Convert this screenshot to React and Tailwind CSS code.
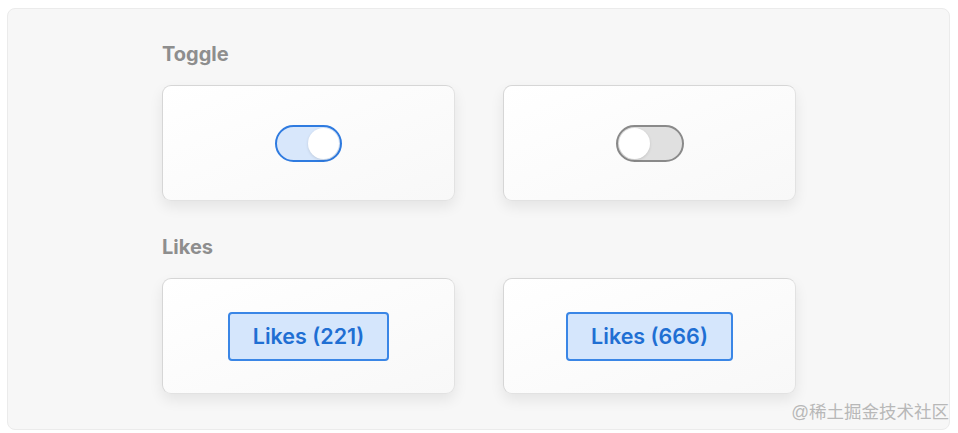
import React from 'react';

const Card = ({ children }) => (
  <div className="w-[293px] h-[116px] flex items-center justify-center rounded-[9px] border border-[#d6d6d6] border-b-[#e2e2e2] border-r-[#e2e2e2] bg-gradient-to-br from-white to-[#f8f8f8] shadow-[0_6px_14px_rgba(0,0,0,0.08)]">
    {children}
  </div>
);

const Toggle = ({ on }) => (
  <div
    className={
      on
        ? 'w-[67px] h-[37px] rounded-full border-2 border-[#2f7be0] bg-[#d8e7fb] flex items-center justify-end px-[1px]'
        : 'w-[68px] h-[37px] rounded-full border-2 border-[#8a8a8a] bg-[#e0e0e0] flex items-center justify-start px-[1px]'
    }
  >
    <div className="w-[31px] h-[31px] rounded-full bg-white shadow-[0_1px_3px_rgba(0,0,0,0.12)]" />
  </div>
);

const LikeButton = ({ count }) => (
  <button className="h-[49px] px-[23px] rounded-[4px] border-2 border-[#3a86e6] bg-[#d5e6fc] text-[#1f6fd3] text-[21.5px] font-semibold">
    Likes ({count})
  </button>
);

export default function App() {
  return (
    <div className="w-[958px] h-[433px] bg-white pt-[8px] pl-[7px]" style={{ fontFamily: 'Inter, "Noto Sans CJK SC", sans-serif' }}>
      <div className="relative w-[943px] h-[422px] rounded-lg border border-[#ebebeb] bg-[#f7f7f7] pl-[154px] pt-[32px]">
        <h3 className="text-[20px] leading-[26px] font-bold text-[#8e8e8e] mb-[18px]">Toggle</h3>
        <div className="flex gap-[48px]">
          <Card>
            <Toggle on />
          </Card>
          <Card>
            <Toggle />
          </Card>
        </div>

        <h3 className="mt-[33px] text-[20px] leading-[26px] font-bold text-[#8e8e8e] mb-[18px]">Likes</h3>
        <div className="flex gap-[48px]">
          <Card>
            <LikeButton count={221} />
          </Card>
          <Card>
            <LikeButton count={666} />
          </Card>
        </div>

        <span className="absolute right-[0px] bottom-[4px] text-[17.5px] text-[#b8b8b8]" style={{ fontFamily: '"Liberation Sans", "Noto Sans CJK SC", sans-serif' }}>
          @稀土掘金技术社区
        </span>
      </div>
    </div>
  );
}
